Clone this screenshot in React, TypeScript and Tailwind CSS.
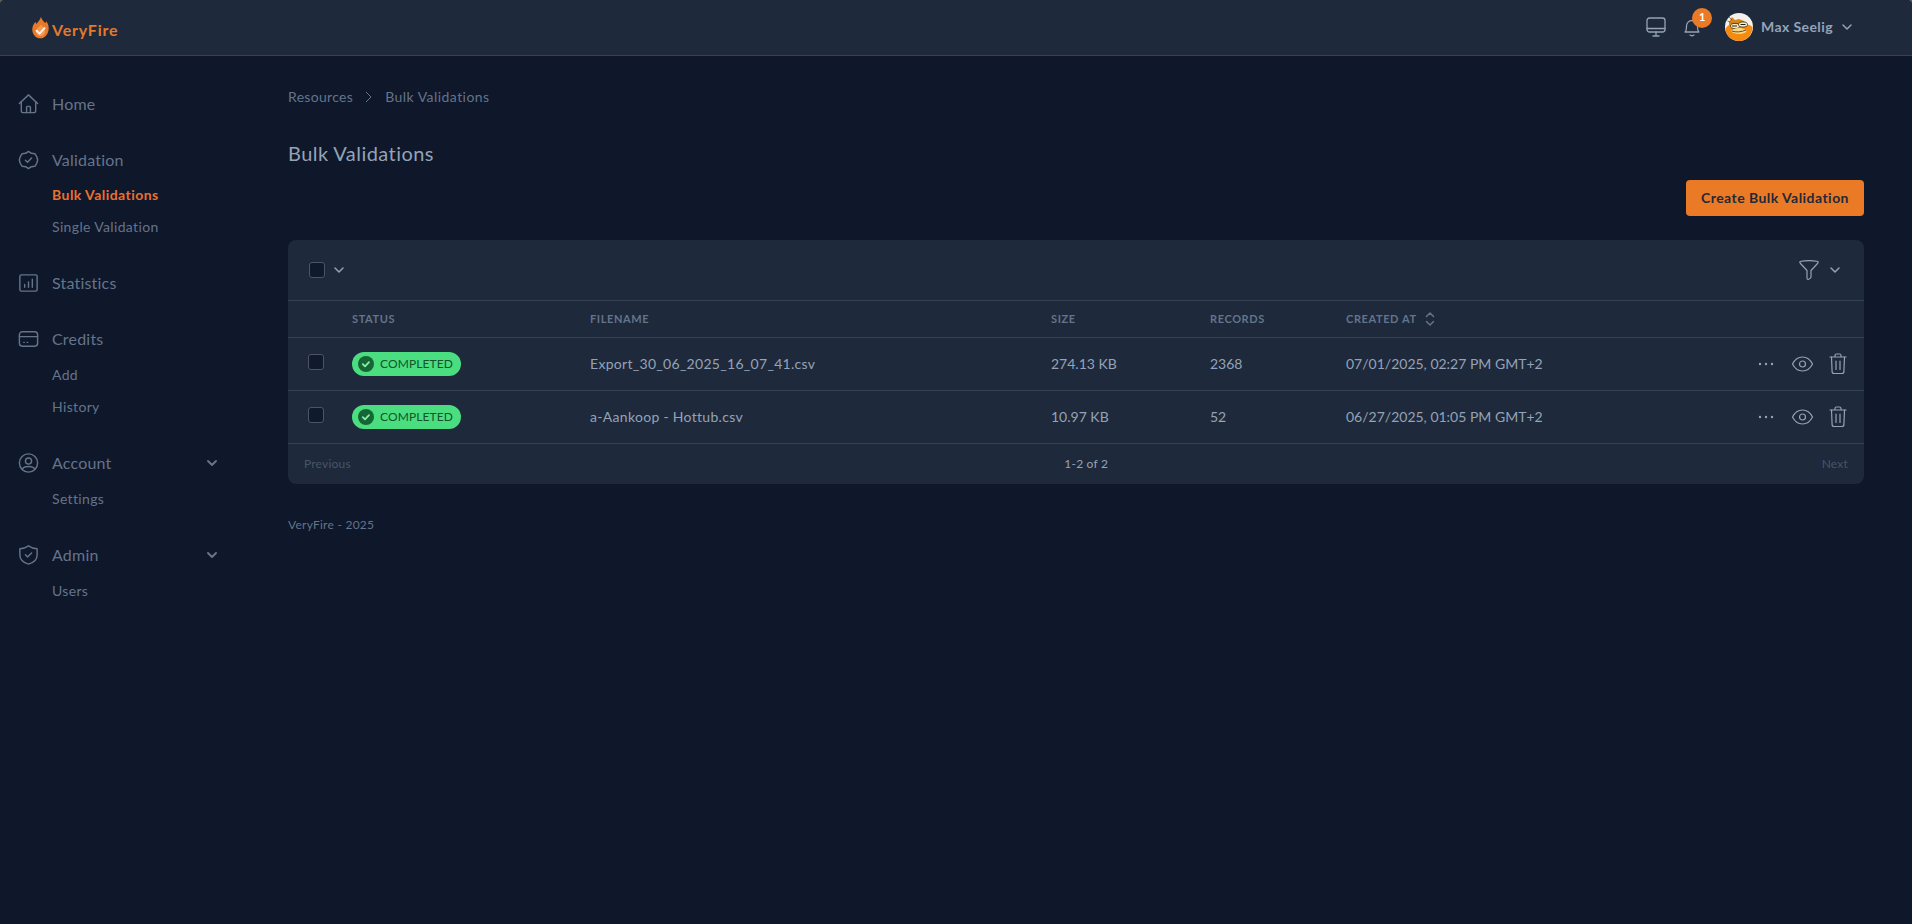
import { ReactNode } from "react";

const font = "font-['Lato','Noto_Sans',sans-serif]";

const Icon = ({ className, children, sw = 1.5 }: { className?: string; children: ReactNode; sw?: number }) => (
  <svg viewBox="0 0 24 24" fill="none" stroke="currentColor" strokeWidth={sw} strokeLinecap="round" strokeLinejoin="round" className={className}>
    {children}
  </svg>
);

const HomeIcon = () => (
  <Icon className="w-6 h-6">
    <path d="M2.5 11.5 12 2.500l9.500 9" />
    <path d="M4.500 9.500V19a2 2 0 0 0 2 2h11a2 2 0 0 0 2-2V9.500" />
    <path d="M10 21v-5.500a1 1 0 0 1 1-1h2a1 1 0 0 1 1 1V21" />
  </Icon>
);

const BadgeIcon = () => (
  <Icon className="w-6 h-6">
    <path d="M12 2l3 2 3.600.4 2 3.200 1 3.400-1 3.400-2 3.200-3.600.4-3 2-3-2-3.600-.4-2-3.200-1-3.400 1-3.400 2-3.200L9 4z" transform="translate(0 1)" />
    <path d="m8.800 12.200 2.200 2.100 4.200-4.400" />
  </Icon>
);

const ChartIcon = () => (
  <Icon className="w-6 h-6">
    <rect x="3" y="3.500" width="18" height="17" rx="1.500" />
    <path d="M8 16.500v-3M12 16.500v-5.500M16 16.500V8" />
  </Icon>
);

const CardIcon = () => (
  <Icon className="w-6 h-6">
    <rect x="2.500" y="4.500" width="19" height="15" rx="3" />
    <path d="M2.500 9.500h19M7 15.500h.6M10.500 15.500h.6" />
  </Icon>
);

const UserIcon = () => (
  <Icon className="w-6 h-6">
    <circle cx="12" cy="12" r="9.500" />
    <circle cx="12" cy="10" r="3.200" />
    <path d="M5.500 18.500c1-2 3-2.800 6.500-2.800s5.500.8 6.500 2.800" />
  </Icon>
);

const ShieldIcon = () => (
  <Icon className="w-6 h-6">
    <path d="M12 2.500c2.500 1.800 5.500 2.800 9 3v6.500c0 4.500-3.500 8-9 9.500-5.500-1.500-9-5-9-9.500V5.500c3.500-.2 6.500-1.200 9-3z" />
    <path d="m8.800 11.800 2.200 2.200 4.200-4.200" />
  </Icon>
);

const Chevron = ({ className }: { className: string }) => (
  <svg viewBox="0 0 12 12" fill="none" stroke="currentColor" strokeWidth={1.5} strokeLinecap="round" strokeLinejoin="round" className={className}>
    <path d="m2 4 4 4 4-4" />
  </svg>
);

const FlameLogo = () => (
  <svg viewBox="0 0 18 24" className="w-[17px] h-[23px]">
    <path
      d="M9.500 0.500c.6 3 2.800 4.500 4.500 7 .5-.6.8-1.200 1-2 1.600 2 2.700 4.300 2.700 7.300 0 5.600-3.700 10.700-8.700 10.700S.3 19 .3 14c0-3.200 1.800-6.100 3.500-8 .1 1 .3 1.700.8 2.300C6.200 6 8.800 3.500 9.500.5z"
      fill="#e9792a"
    />
    <path d="M9.300 9c.8 1.500 4.700 3 4.700 7 0 3-2.300 5-5 5s-5-2-5-5c0-3 3.800-4.500 5.300-7z" fill="#f09a55" />
    <path d="m5 15.500 3 3 5.200-5.800" fill="none" stroke="#f8efe6" strokeWidth={2.200} strokeLinecap="round" strokeLinejoin="round" />
  </svg>
);

const Avatar = () => (
  <svg viewBox="0 0 28 28" className="w-7 h-7">
    <circle cx="14" cy="14" r="14" fill="#f4f1ea" />
    <path d="M4 9l3-5 3 3 4-1 5 2 2 4v3H4z" fill="#d9861c" />
    <path d="M0.500 16c2-5 7-6 13-5 5 .5 9-1 14 3 0 8-6 14-13.500 14S1 23 .5 16z" fill="#f58a0c" />
    <ellipse cx="10" cy="13" rx="4.500" ry="2.600" fill="#f5ecc8" stroke="#3a2a12" strokeWidth="0.800" />
    <ellipse cx="18" cy="11.500" rx="4.500" ry="2.600" fill="#f5ecc8" stroke="#3a2a12" strokeWidth="0.800" />
    <path d="M7 13h5M15.500 11.500h5" stroke="#2b1d0c" strokeWidth="1" />
    <ellipse cx="14" cy="18" rx="7.500" ry="3" fill="#f7d88a" />
    <path d="M7 18c4 1.500 9 1.200 14-1" stroke="#3a2a12" strokeWidth="0.800" fill="none" />
    <path d="M4 4l3 3M2.500 8l3 1" stroke="#3a2a12" strokeWidth="0.600" />
  </svg>
);

const navGroups = [
  { label: "Home", icon: <HomeIcon /> },
  { label: "Validation", icon: <BadgeIcon />, items: ["Bulk Validations", "Single Validation"] },
  { label: "Statistics", icon: <ChartIcon /> },
  { label: "Credits", icon: <CardIcon />, items: ["Add", "History"] },
  { label: "Account", icon: <UserIcon />, items: ["Settings"], chevron: true },
  { label: "Admin", icon: <ShieldIcon />, items: ["Users"], chevron: true },
];

const rows = [
  { filename: "Export_30_06_2025_16_07_41.csv", size: "274.13 KB", records: "2368", created: "07/01/2025, 02:27 PM GMT+2" },
  { filename: "a-Aankoop - Hottub.csv", size: "10.97 KB", records: "52", created: "06/27/2025, 01:05 PM GMT+2" },
];

const gridCols = "grid grid-cols-[64px_238px_461px_159px_136px_1fr] items-center";

const Checkbox = () => <div className="w-4 h-4 rounded-[3px] border border-[#4b5563] bg-[#111a2c]" />;

const Header = () => (
  <header className="h-14 shrink-0 flex items-center bg-[#1e293b] border-b border-[#334155] pl-8 pr-[59px]">
    <div className="flex items-center gap-[3px] mt-[2px]">
      <span className="-mt-[3px]">
        <FlameLogo />
      </span>
      <span className="text-[#e27a2e] text-[16px] font-bold tracking-[0.8px] mt-[2px]">VeryFire</span>
    </div>
    <div className="ml-auto flex items-center text-[#94a3b8] -mt-[2px]">
      <svg viewBox="0 0 22 22" fill="none" stroke="currentColor" strokeWidth={1.300} strokeLinecap="round" strokeLinejoin="round" className="w-[22px] h-[22px]">
        <rect x="2" y="2" width="18" height="14" rx="2.500" />
        <path d="M2 12.500h18M8 20h6M11 16v4" />
      </svg>
      <div className="relative ml-[14px] w-[22px] h-[22px]">
        <svg viewBox="0 0 22 22" fill="none" stroke="currentColor" strokeWidth={1.300} strokeLinecap="round" strokeLinejoin="round" className="w-[22px] h-[22px]">
          <path d="M4 16c1.500-1 1.500-3 1.500-6a5.500 5.500 0 0 1 5.500-5.500c3 0 5.500 2.500 5.500 5.500 0 3 0 5 1.500 6z" />
          <path d="M9 19c.6 1 3.400 1 4 0" />
        </svg>
        <span className="absolute -top-2 left-[11px] w-5 h-5 rounded-full bg-[#ea7a26] text-white text-[11px] font-bold flex items-center justify-center">1</span>
      </div>
      <div className="ml-[22px]">
        <Avatar />
      </div>
      <span className="ml-2 text-sm font-bold text-[#94a3b8] tracking-[0.4px]">Max Seelig</span>
      <Chevron className="ml-2 w-3 h-3" />
    </div>
  </header>
);

const Sidebar = () => (
  <aside className="w-[288px] shrink-0 pt-8 pl-[17px] flex flex-col gap-6 text-[#64748b]">
    {navGroups.map((group) => (
      <div key={group.label} className="w-[201px]">
        <div className="h-8 flex items-center gap-3">
          <span className="w-[23px] flex justify-center">{group.icon}</span>
          <span className="text-[16px] tracking-[0.2px]">{group.label}</span>
          {group.chevron && <Chevron className="ml-auto w-3 h-3 stroke-2" />}
        </div>
        {group.items && (
          <div className={`pl-[35px] ${group.label === "Validation" ? "mt-[3px]" : "mt-1"}`}>
            {group.items.map((item) => (
              <div
                key={item}
                className={`h-8 flex items-center text-sm ${item === "Bulk Validations" ? "font-bold text-[#ea7030] tracking-[0.45px]" : "tracking-[0.35px]"}`}
              >
                {item}
              </div>
            ))}
          </div>
        )}
      </div>
    ))}
  </aside>
);

const BulkTable = () => (
  <div className="mt-6 rounded-lg bg-[#1e293b] text-sm text-[#94a3b8]">
    <div className="h-[61px] flex items-center pl-[21px] pr-[23px] border-b border-[#334155]">
      <Checkbox />
      <Chevron className="ml-2 w-3 h-3" />
      <svg viewBox="0 0 22 22" fill="none" stroke="currentColor" strokeWidth={1.200} strokeLinecap="round" strokeLinejoin="round" className="ml-auto w-[22px] h-[22px]">
        <path d="M2 2.500c5-1 13-1 18 0 .5.700 0 1.500-.5 2L13 11.500V18c0 1-2.500 2.500-3 2.500s-1-.5-1-1.500v-7.500L2.500 4.500c-.5-.5-1-1.300-.5-2z" />
      </svg>
      <Chevron className="ml-[9px] w-3 h-3" />
    </div>
    <div className={`${gridCols} h-[37px] border-b border-[#334155] text-[11px] font-bold text-[#64748b] tracking-[0.6px]`}>
      <span />
      <span>STATUS</span>
      <span>FILENAME</span>
      <span>SIZE</span>
      <span>RECORDS</span>
      <span className="flex items-center gap-2">
        CREATED AT
        <svg viewBox="0 0 10 16" fill="none" stroke="currentColor" strokeWidth={1.500} strokeLinecap="round" strokeLinejoin="round" className="w-[10px] h-4">
          <path d="m1.500 5.500 3.500-3.500 3.500 3.500M1.500 10.500l3.500 3.500 3.500-3.500" />
        </svg>
      </span>
    </div>
    {rows.map((row) => (
      <div key={row.filename} className={`${gridCols} h-[53px] border-b border-[#334155]`}>
        <span className="pl-[20px] -mt-1"><Checkbox /></span>
        <span className="flex">
          <span className="inline-flex items-center h-6 w-[109px] rounded-full bg-[#4ade80] text-[#14532d] text-[12px] pl-[6px] gap-[6px] tracking-[0.1px]">
            <svg viewBox="0 0 16 16" className="w-4 h-4">
              <circle cx="8" cy="8" r="8" fill="#166534" />
              <path d="m4.800 8.200 2.200 2.200 4-4.200" fill="none" stroke="#86efac" strokeWidth={1.800} strokeLinecap="round" strokeLinejoin="round" />
            </svg>
            COMPLETED
          </span>
        </span>
        <span className="tracking-[0.3px]">{row.filename}</span>
        <span>{row.size}</span>
        <span>{row.records}</span>
        <div className="flex items-center pr-[17px]">
          <span>{row.created}</span>
          <div className="ml-auto flex items-center">
            <svg viewBox="0 0 16 4" className="w-4 h-1 fill-current">
              <circle cx="2" cy="2" r="1.200" />
              <circle cx="8" cy="2" r="1.200" />
              <circle cx="14" cy="2" r="1.200" />
            </svg>
            <svg viewBox="0 0 22 16" fill="none" stroke="currentColor" strokeWidth={1.200} className="ml-[17px] w-[23px] h-4">
              <path d="M1 8c2-4 5.500-7 10-7s8 3 10 7c-2 4-5.500 7-10 7S3 12 1 8z" />
              <circle cx="11" cy="8" r="3" />
            </svg>
            <svg viewBox="0 0 18 22" fill="none" stroke="currentColor" strokeWidth={1.200} strokeLinecap="round" strokeLinejoin="round" className="ml-[15px] w-[18px] h-[22px]">
              <path d="M1 4h16M6 4V2.500C6 1.700 6.700 1 7.500 1h3c.8 0 1.500.7 1.500 1.500V4" />
              <path d="M2.500 4l.6 14.500c0 1 .9 2 2 2h7.800c1.100 0 2-1 2-2L15.500 4" />
              <path d="M7 8v8.500M11 8v8.500" />
            </svg>
          </div>
        </div>
      </div>
    ))}
    <div className="h-10 flex items-center justify-between px-4 text-[12px] tracking-[0.2px]">
      <span className="text-[#475569]">Previous</span>
      <span className="text-[#94a3b8]">1-2 of 2</span>
      <span className="text-[#475569]">Next</span>
    </div>
  </div>
);

export default function App() {
  return (
    <div className="h-screen bg-[#5a5a5a]">
      <div className={`h-full flex flex-col rounded-t-[5px] overflow-hidden bg-[#0f172a] ${font}`}>
        <Header />
        <div className="flex-1 flex">
          <Sidebar />
          <main className="flex-1 pr-[48px] pt-[31px]">
            <nav className="flex items-center h-5 text-sm text-[#64748b] tracking-[0.32px]">
              <span>Resources</span>
              <svg viewBox="0 0 8 12" fill="none" stroke="currentColor" strokeWidth={1} className="mx-3 w-2 h-3">
                <path d="m1 1 5 5-5 5" />
              </svg>
              <span className="tracking-[0.45px]">Bulk Validations</span>
            </nav>
            <h1 className="mt-[30px] text-[20px] leading-[32px] text-[#94a3b8] tracking-[0.44px]">Bulk Validations</h1>
            <div className="flex justify-end mt-[11px]">
              <button className="h-9 w-[178px] rounded bg-[#ea7a26] text-sm font-bold text-[#1f2937] tracking-[0.45px]">Create Bulk Validation</button>
            </div>
            <BulkTable />
            <p className="mt-[32px] text-[12px] text-[#64748b] tracking-[0.25px]">VeryFire - 2025</p>
          </main>
        </div>
      </div>
    </div>
  );
}
